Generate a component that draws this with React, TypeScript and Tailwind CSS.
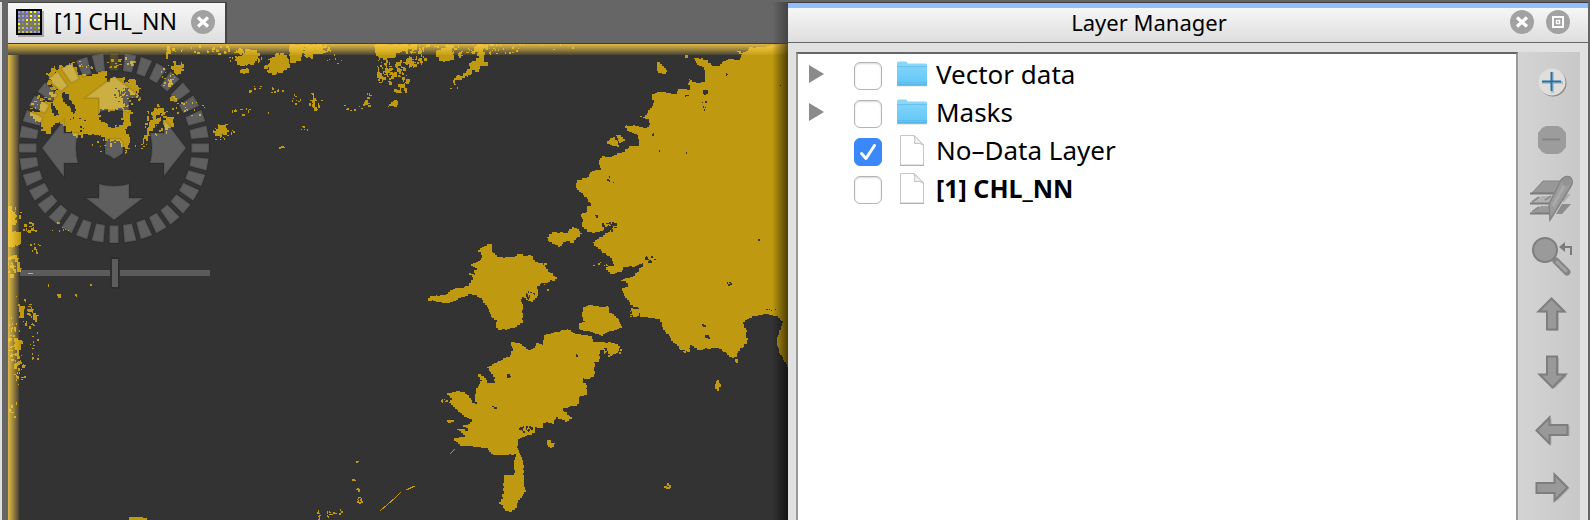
import React, { useState } from "react";

type Pt = [number, number];

function makeRandom(seed: number) {
  let s = seed;
  return () => {
    s = (s * 1664525 + 1013904223) % 4294967296;
    return s / 4294967296;
  };
}

/* Turns a coarse outline into a coastline with small irregular steps. */
function coast(points: string, seed: number, rough = 4): string {
  const rnd = makeRandom(seed);
  const pts = points.trim().split(/\s+/).map((p) => p.split(",").map(Number) as Pt);
  const snap = (v: number) => Math.round(v / 3) * 3;
  let d = "";
  pts.forEach((p, i) => {
    const q = pts[(i + 1) % pts.length];
    const n = Math.max(1, Math.round(Math.hypot(q[0] - p[0], q[1] - p[1]) / 8));
    for (let k = 0; k < n; k++) {
      const t = k / n;
      const j = k === 0 ? 0 : rough;
      const x = snap(p[0] + (q[0] - p[0]) * t + (rnd() - 0.5) * j);
      const y = snap(p[1] + (q[1] - p[1]) * t + (rnd() - 0.5) * j);
      d += d === "" ? `M${x} ${y}` : `H${x}V${y}`;
    }
  });
  return d + "Z";
}

/* Scattered pixels inside an ellipse: cx, cy, rx, ry, count, largest size. */
type Cluster = [number, number, number, number, number, number];
function specks(list: Cluster[], seed: number): string {
  const rnd = makeRandom(seed);
  let d = "";
  for (const [cx, cy, rx, ry, n, max] of list) {
    for (let i = 0; i < n; i++) {
      const a = rnd() * Math.PI * 2;
      const r = Math.sqrt(rnd());
      const x = Math.round(cx + Math.cos(a) * rx * r);
      const y = Math.round(cy + Math.sin(a) * ry * r);
      const w = 1 + Math.floor(rnd() * max);
      const h = 1 + Math.floor(rnd() * max);
      d += `M${x} ${y}h${w}v${h}h${-w}z`;
    }
  }
  return d;
}

const MAINLAND =
  "687,9 640,15 603,22 575,20 565,33 550,38 530,28 530,35 545,45 540,60 515,58 490,65 480,78 455,75 445,60 430,55 402,56 410,75 425,82 434,95 434,125 415,128 395,120 387,118 388,130 378,130 390,142 390,150 375,148 355,145 350,162 325,160 300,155 275,165 275,180 282,188 275,205 255,230 235,228 265,238 270,255 262,265 225,255 188,258 200,272 235,290 238,318 215,318 195,335 155,350 130,348 118,370 122,390 95,395 82,415 50,420 48,445 70,465 93,498 80,500 82,515 62,525 70,545 65,562 80,575 105,577 130,570 127,550 135,560 160,565 150,575 130,590 98,610 115,628 150,655 162,678 145,680 130,675 150,702 182,697 190,682 215,680 245,670 248,680 230,700 210,715 182,722 205,730 205,742 188,745 188,760 210,795 235,805 240,830 300,838 308,870 330,895 360,930 385,930 390,915 410,930 435,925 470,925 490,935 515,955 530,945 540,925 562,910 560,870 550,845 575,828 610,822 650,828 668,850 650,900 658,940 687,985";
const NORTH_ISLAND =
  "85,235 90,228 130,224 165,204 205,198 212,180 225,178 208,160 228,165 222,150 232,145 214,132 240,120 245,105 235,90 245,80 262,72 275,78 275,95 290,112 330,112 360,102 378,108 392,108 400,120 435,140 445,155 472,178 450,185 430,190 412,200 412,235 400,245 385,240 372,230 362,245 368,262 368,308 350,322 330,328 295,328 288,318 292,300 275,290 265,262 250,240 230,225 210,222 190,232 150,250 85,240";
const SOUTH_ISLAND =
  "340,365 355,368 385,390 400,385 408,370 430,378 432,345 470,335 500,328 525,342 575,348 578,365 640,368 660,385 655,400 635,408 620,385 600,395 598,425 582,430 583,470 560,478 553,475 548,490 558,495 560,525 540,530 532,558 495,565 488,572 515,598 500,605 475,592 465,600 462,612 445,605 430,612 430,625 410,622 405,640 375,650 355,665 352,685 360,705 370,725 372,800 378,815 360,840 350,865 335,875 315,868 298,845 308,830 312,765 345,765 342,720 348,702 320,706 278,703 265,685 235,680 185,678 163,655 185,650 200,655 190,640 170,628 190,628 205,640 205,625 188,615 210,612 215,598 185,580 165,560 148,545 155,535 142,518 175,512 200,525 215,548 232,558 225,530 228,505 245,480 235,462 250,468 262,490 285,490 285,470 260,440 290,425 330,405 338,385 332,365";
const SMALL_ISLES = [
  "442,50 455,35 495,38 515,22 530,28 545,43 530,55 522,70 500,62 480,82 465,72 448,62",
  "550,262 565,255 625,262 628,280 655,298 665,325 650,330 620,338 610,348 580,335 540,328 538,310 555,302 545,285",
  "442,660 450,660 454,670 464,672 455,684 445,676",
  "432,128 442,128 442,136 432,136",
];
const COAST_ISLES = [
  "291,66 300,72 322,95 318,102 297,98 291,85",
  "375,44 386,44 384,54 376,52",
  "138,303 160,292 174,308 176,322 155,314",
  "166,284 180,286 196,302 184,308",
  "216,808 240,806 238,828 222,830",
  "524,972 530,950 534,968 528,975",
  "470,1020 476,1028 482,1042 478,1052 470,1046 464,1032",
];
const DIAL_ISLES = [
  "154,217 199,194 219,202 234,224 259,227 314,214 322,247 339,232 369,232 379,257 359,292 374,322 344,332 305,327 294,345 304,367 324,380 369,377 389,422 389,447 374,442 359,422 324,422 299,407 264,402 234,414 219,402 189,372 164,367 159,382 152,402 124,387 124,367 94,347 89,337 119,337 119,312 149,307 174,282 174,262 144,222",
  "374,247 400,238 414,262 409,282 389,277",
  "366,325 384,322 394,337 392,377 380,387 370,365",
  "455,350 480,352 484,362 470,372 458,392 444,410 430,436 428,415 445,395",
  "490,360 502,350 522,358 522,380 505,390 494,380",
  "496,146 510,143 512,162 503,176 498,166",
  "517,187 545,192 556,204 544,222 530,226 516,208",
  "500,240 522,232 520,256 508,260",
  "508,290 528,295 530,306 512,304",
  "460,332 484,325 504,334 480,344 468,350",
  "638,392 655,374 675,372 682,392 665,412 650,408",
  "702,177 725,165 735,148 770,152 774,176 745,190 735,196 712,184",
];
const TOP_ISLES = [
  "106,85 130,70 160,72 174,85 165,98 145,105 110,98",
  "205,105 215,80 240,64 262,85 270,115 250,128 215,130 202,120",
  "270,42 310,40 312,70 302,92 275,98 268,72",
  "318,42 378,42 375,70 350,72 335,85 320,80",
  "514,42 655,42 650,60 600,68 575,85 535,92 528,70",
  "582,92 600,90 602,108 588,112",
  "620,85 630,80 642,108 625,110",
  "710,60 740,42 760,55 762,90 735,96 715,82",
  "820,42 875,42 850,65 852,85 864,100 840,118 795,145 765,160 763,145 790,130 808,100 835,85",
  "585,180 610,155 605,188 590,190",
  "560,118 566,110 570,128 562,150",
  "535,108 540,130 550,148 544,152 532,130",
  "126,118 144,118 140,130 128,130",
  "334,190 342,184 344,220 350,234 336,232",
  "580,214 592,214 590,232 564,230 566,222 580,224",
];
const HOLE_SHAPES = [
  "190,277 204,282 208,300 222,315 228,332 222,345 212,325 196,310 188,300",
  "152,310 165,325 176,345 168,348 156,328",
  "206,356 222,352 214,364",
];

const SPECKS: Cluster[] = [
  [56, 80, 12, 16, 50, 4],
  [78, 66, 16, 5, 16, 2],
  [40, 106, 10, 12, 24, 3],
  [120, 63, 14, 7, 20, 3],
  [128, 92, 12, 14, 36, 2],
  [118, 145, 30, 8, 24, 2],
  [156, 122, 12, 18, 36, 3],
  [168, 76, 8, 12, 16, 2],
  [190, 108, 18, 8, 18, 2],
  [220, 132, 13, 8, 24, 2],
  [205, 49, 38, 4, 26, 3],
  [245, 56, 16, 9, 44, 3],
  [276, 65, 14, 8, 30, 3],
  [310, 50, 20, 6, 40, 3],
  [254, 88, 8, 4, 8, 2],
  [276, 89, 8, 5, 8, 2],
  [315, 104, 8, 6, 12, 3],
  [296, 100, 4, 8, 9, 2],
  [335, 60, 8, 6, 7, 2],
  [250, 111, 20, 3, 10, 3],
  [302, 128, 5, 2, 5, 2],
  [281, 146, 3, 2, 4, 2],
  [366, 98, 4, 8, 10, 3],
  [354, 106, 12, 4, 8, 2],
  [384, 72, 8, 14, 36, 3],
  [400, 80, 8, 14, 36, 3],
  [412, 58, 12, 8, 30, 3],
  [442, 50, 32, 7, 40, 3],
  [498, 49, 20, 5, 26, 2],
  [530, 46, 60, 3, 10, 2],
  [455, 86, 8, 5, 4, 2],
  [12, 214, 8, 8, 20, 4],
  [13, 238, 6, 8, 36, 4],
  [12, 265, 8, 10, 24, 4],
  [30, 227, 8, 5, 14, 3],
  [34, 246, 6, 6, 8, 3],
  [60, 228, 12, 3, 6, 2],
  [18, 312, 12, 18, 20, 2],
  [30, 316, 6, 14, 26, 3],
  [13, 345, 7, 18, 24, 4],
  [19, 368, 6, 14, 24, 3],
  [35, 348, 5, 18, 12, 2],
  [14, 398, 6, 20, 6, 3],
  [76, 295, 2, 1, 2, 2],
  [318, 515, 1, 6, 12, 2],
  [330, 514, 5, 4, 12, 2],
  [339, 511, 2, 2, 4, 2],
  [359, 499, 3, 3, 14, 2],
  [352, 480, 2, 1, 4, 3],
  [357, 489, 2, 1, 4, 3],
  [356, 460, 1, 1, 2, 2],
  [443, 400, 4, 2, 8, 2],
  [450, 421, 5, 1, 10, 2],
  [546, 286, 4, 5, 4, 2],
  [612, 350, 9, 6, 18, 2],
  [632, 312, 6, 4, 6, 2],
  [600, 264, 8, 2, 6, 2],
  [667, 485, 3, 2, 7, 3],
  [684, 350, 6, 2, 8, 2],
];

const HOLES: Cluster[] = [
  [80, 122, 6, 8, 5, 2],
  [120, 92, 6, 10, 12, 2],
  [530, 294, 5, 5, 12, 2],
  [525, 428, 8, 3, 18, 2],
  [493, 407, 1, 1, 4, 3],
  [576, 354, 1, 1, 3, 3],
  [507, 375, 1, 1, 3, 3],
  [704, 92, 2, 3, 12, 3],
  [704, 104, 2, 6, 6, 2],
  [726, 73, 2, 1, 3, 2],
  [685, 95, 2, 1, 3, 2],
  [610, 225, 5, 4, 22, 3],
  [597, 215, 2, 1, 4, 2],
  [646, 257, 2, 1, 5, 3],
  [650, 260, 5, 4, 6, 2],
  [610, 179, 4, 4, 4, 2],
  [652, 134, 1, 2, 3, 2],
  [658, 150, 1, 1, 1, 2],
  [687, 152, 1, 1, 1, 2],
  [728, 283, 2, 1, 4, 2],
  [758, 239, 1, 1, 2, 2],
  [703, 325, 1, 2, 5, 2],
  [706, 336, 3, 1, 7, 2],
  [772, 309, 7, 1, 6, 1],
  [780, 85, 1, 2, 3, 1],
];

const ticks = Array.from({ length: 36 }, (_, i) => i * 10);

function MapView() {
  return (
    <svg
      className="block h-full w-full"
      viewBox="8 44 780 476"
      preserveAspectRatio="xMinYMin slice"
      role="img"
      aria-label="CHL_NN image view"
    >
      <defs>
        <linearGradient id="glow" x1="0" y1="0" x2="0" y2="1">
          <stop offset="0" stopColor="#ffd24a" stopOpacity="0.85" />
          <stop offset="0.5" stopColor="#ffd24a" stopOpacity="0.5" />
          <stop offset="1" stopColor="#ffd24a" stopOpacity="0.1" />
        </linearGradient>
        <linearGradient id="glowLeft" href="#glow" x1="0" y1="0" x2="1" y2="0" />
        <linearGradient id="shade" x1="0" y1="0" x2="1" y2="0">
          <stop offset="0" stopColor="#000" stopOpacity="0" />
          <stop offset="1" stopColor="#000" stopOpacity="0.6" />
        </linearGradient>
      </defs>
      <rect x="8" y="44" width="780" height="476" fill="#333333" />
      <g fill="#bf9a10" shapeRendering="crispEdges">
        <g transform="translate(560 40) scale(0.33333)">
          <path d={coast(MAINLAND, 7)} />
          {COAST_ISLES.map((p, i) => (
            <path key={i} d={coast(p, 20 + i)} />
          ))}
        </g>
        <g transform="translate(400 220) scale(0.33333)">
          <path d={coast(NORTH_ISLAND, 3)} />
          <path d={coast(SOUTH_ISLAND, 5)} />
          {SMALL_ISLES.map((p, i) => (
            <path key={i} d={coast(p, 40 + i)} />
          ))}
        </g>
        <g transform="scale(0.33333)">
          {DIAL_ISLES.map((p, i) => (
            <path key={i} d={coast(p, 60 + i, 12)} />
          ))}
          {HOLE_SHAPES.map((p, i) => (
            <path key={i} d={coast(p, 110 + i, 6)} fill="#333333" />
          ))}
        </g>
        <g transform="translate(200 30) scale(0.33333)">
          {TOP_ISLES.map((p, i) => (
            <path key={i} d={coast(p, 80 + i, 12)} />
          ))}
        </g>
        <path d="M8 206h4v6h3v8h-3v12h9v12h-6v3h-7zM19 306h6v3h-1v9h-4v-6h-1zM15 341h8v3h-2v6h-6v-3h-1zM14 364l7-4v2l-7 7zM129 517h14v1h4v2h-18zM57 294h4v4h-3zM28 273h5v1h-5zM57 222h3v2h-3zM48 284h1v3h-1zM90 284h2v2h-2zM75 294h2v2h-2z" />
        <path d={specks(SPECKS, 11)} />
        <path
          d="M380 511l8-7 7-6 6-6M407 490l8-4M450 454l5-5M406 490l8-4"
          fill="none"
          stroke="#bf9a10"
          strokeWidth="1"
        />
        <path d={specks(HOLES, 29)} fill="#333333" />
      </g>

      <rect x="8" y="44" width="780" height="11" fill="url(#glow)" />
      <rect x="8" y="55" width="11" height="465" fill="url(#glowLeft)" />
      <rect x="772" y="44" width="16" height="476" fill="url(#shade)" />

      <g transform="translate(114 148)" stroke="#000" strokeOpacity="0.1" strokeWidth="2">
        {ticks.map((a) => (
          <path
            key={a}
            d={a % 90 === 0 ? "M-4.500-95H4.500V-77.500H-4.500Z" : "M-6-95H6L4.500-77.500H-4.500Z"}
            transform={`rotate(${a})`}
            fill={a === 0 ? "#bf9a10" : "#fff"}
            fillOpacity="0.22"
          />
        ))}
        {[0, 90, 180, 270].map((a) => (
          <path
            key={a}
            d="M-15 36Q0 40 15 36V50H29L0 72L-28 50H-15Z"
            transform={`rotate(${a})`}
            fill="#fff"
            fillOpacity="0.21"
          />
        ))}
        <path d="M-9-5L-6-9H6L9-5V5L5 8L0 11L-4 8L-9 6Z" fill="#fff" fillOpacity="0.21" />
      </g>
    </svg>
  );
}

function RoundIcon({ kind }: { kind: "close" | "float" }) {
  return (
    <svg className="block size-6" viewBox="0 0 24 24" aria-hidden="true">
      <circle cx="12" cy="12" r="12" fill="#a2a2a2" />
      {kind === "close" ? (
        <path d="M7 7.500L17 16.500M17 7.500L7 16.500" stroke="#fff" strokeWidth="3.200" />
      ) : (
        <g fill="none" stroke="#fff">
          <rect x="7" y="7" width="10" height="10" strokeWidth="2" />
          <rect x="10.500" y="10.500" width="3" height="3" fill="#8a8a8a" strokeWidth="1.500" />
        </g>
      )}
    </svg>
  );
}

function RasterIcon() {
  const rows = ["bbbyyb", "bbbyby", "bbyyyy", "ydwdww", "wwbbdw", "wwwwbb"];
  const colors: Record<string, string> = { b: "#9999ff", y: "#ffff20", w: "#cccc30", d: "#a08a00" };
  return (
    <svg className="block size-7" viewBox="0 0 28 28" aria-hidden="true" shapeRendering="crispEdges">
      <rect x="2" y="2" width="26" height="26" fill="#000" fillOpacity="0.25" />
      <rect x="1" y="1" width="24" height="24" fill="#777" stroke="#000" strokeWidth="2" />
      {rows.flatMap((row, r) =>
        row.split("").map((k, c) => (
          <rect key={`${r}-${c}`} x={2 + c * 4} y={2 + r * 4} width="2" height="2" fill={colors[k]} />
        )),
      )}
    </svg>
  );
}

function FolderIcon() {
  return (
    <svg className="block h-7 w-[30px]" viewBox="0 0 30 28" aria-hidden="true">
      <defs>
        <linearGradient id="folder" x1="0" y1="0" x2="0" y2="1">
          <stop offset="0" stopColor="#7fd3fa" />
          <stop offset="1" stopColor="#62c6f7" />
        </linearGradient>
      </defs>
      <path d="M0 25.500H30V26.500H0Z" fill="#000" fillOpacity="0.15" />
      <path d="M0 3Q0 1.500 1.500 1.500H8.500Q10 1.500 10.500 3.500H28.500Q30 3.500 30 5V25H0Z" fill="#8ad6f8" />
      <path d="M0 6.500H30V24Q30 25.500 28.500 25.500H1.500Q0 25.500 0 24Z" fill="url(#folder)" />
      <path d="M0 6.500H30M0 22.500H30" stroke="#52b4e4" strokeOpacity="0.6" />
      <path d="M0 25H30" stroke="#4ba3d0" />
    </svg>
  );
}

function FileIcon() {
  return (
    <svg className="block h-8 w-[30px]" viewBox="0 0 30 32" aria-hidden="true">
      <path d="M3.500 1.500H17L26.500 11V31H3.500Z" fill="#fff" stroke="#c6c6c6" />
      <path d="M17 1.500Q18.500 5 17.500 9.500Q23 8.500 26.500 11Z" fill="#f2f2f2" stroke="#c0c0c0" />
      <path d="M3 31.500H27" stroke="#b0b0b0" />
    </svg>
  );
}

type Layer = { id: string; name: string; group?: boolean; bold?: boolean };
const layers: Layer[] = [
  { id: "vector", name: "Vector data", group: true },
  { id: "masks", name: "Masks", group: true },
  { id: "nodata", name: "No–Data Layer" },
  { id: "chl", name: "[1] CHL_NN", bold: true },
];

function LayerRow({ layer }: { layer: Layer }) {
  const [on, setOn] = useState(layer.id === "nodata");
  return (
    <li className="flex h-[38px] items-center">
      <span className="flex w-[45px] shrink-0 items-center">
        {layer.group && (
          <button type="button" aria-label={`Expand ${layer.name}`} className="pb-1">
            <svg className="block h-[18px] w-[15px]" viewBox="0 0 15 18" aria-hidden="true">
              <path d="M0 0L15 9L0 18Z" fill="#8b8b8b" />
            </svg>
          </button>
        )}
      </span>
      <span className="relative size-7 shrink-0">
        <input
          id={layer.id}
          type="checkbox"
          checked={on}
          onChange={(e) => setOn(e.target.checked)}
          className="block size-7 appearance-none rounded-md border border-[#b4b4b4] bg-white shadow-[inset_0_1px_2px_#d8d8d8] checked:border-[#3b88fd] checked:bg-[#3b88fd] checked:shadow-none"
        />
        {on && (
          <svg className="pointer-events-none absolute inset-0 size-7" viewBox="0 0 28 28" aria-hidden="true">
            <path d="M7.500 15.500L12 20.500L20.500 7.500" fill="none" stroke="#fff" strokeWidth="3" strokeLinecap="round" strokeLinejoin="round" />
          </svg>
        )}
      </span>
      <label htmlFor={layer.id} className="flex items-center gap-[9px] pb-1 pl-[15px]">
        {layer.group ? <FolderIcon /> : <FileIcon />}
        <span className={layer.bold ? "text-[25px] leading-8 font-bold" : "text-[26px] leading-8"}>{layer.name}</span>
      </label>
    </li>
  );
}

const ARROW = "M16 1L29 14H21.500V32H11.500V14H3Z";

function Arrow({ angle }: { angle: number }) {
  return (
    <svg className="block size-9" viewBox="-18 -18 36 36" aria-hidden="true">
      <g transform="translate(2 1)" opacity="0.35">
        <path d={ARROW} transform={`rotate(${angle}) translate(-16.500 -16.500)`} fill="#6d6d6d" />
      </g>
      <path d={ARROW} transform={`rotate(${angle}) translate(-16.500 -16.500)`} fill="#999" stroke="#7e7e7e" strokeWidth="2" />
    </svg>
  );
}

const tools: { label: string; icon: React.ReactNode }[] = [
  {
    label: "Add layer",
    icon: (
      <svg className="block size-8" viewBox="0 0 32 32" aria-hidden="true">
        <circle cx="17" cy="17" r="13.500" fill="#8c8680" />
        <circle cx="16" cy="16" r="13.500" fill="#e1deda" />
        <path d="M16.500 6V27M6 16.500H27" stroke="#9fc6e0" strokeWidth="3" />
        <path d="M15.500 6V25M6 15.500H25" stroke="#2d6e9e" strokeWidth="2" />
      </svg>
    ),
  },
  {
    label: "Remove layer",
    icon: (
      <svg className="block size-8" viewBox="0 0 32 32" aria-hidden="true">
        <path d="M10 2H22L26 4L30 9V23L26 28L22 30H10L6 28L2 23V9L6 4Z" fill="#9c9c9c" />
        <path d="M6 15.500H24" stroke="#858585" strokeWidth="2" />
      </svg>
    ),
  },
  {
    label: "Edit layer",
    icon: (
      <svg className="block size-12" viewBox="0 0 48 48" aria-hidden="true">
        <path d="M4 39.500L13 32H32L24 39.500Z" fill="#9a9a9a" />
        <path d="M3 29L13 22H34L26 29Z" fill="#b2b2b2" />
        <path d="M4 19L15 7H39L28 19Z" fill="#989898" stroke="#868686" />
        <path d="M2 19.500H26M2 29.500H24M2 39.500H24" stroke="#7c7c7c" strokeWidth="2" />
        <path d="M4 28L11 23M4 38L11 33M17 26L23 22" stroke="#8b8b8b" strokeWidth="2" />
        <path d="M34 30H43L34 40H28Z" fill="#8c8c8c" />
        <path d="M35 20H43L35 29Z" fill="#adadad" />
        <path d="M21 30L33 6Q37 1 42 3Q46 7 43 12L27 38L22 46Z" fill="#9b9b9b" stroke="#858585" strokeWidth="1.500" />
        <path d="M25 32L36 12" stroke="#a9a9a9" strokeWidth="3" />
        <circle cx="38.500" cy="7.500" r="4" fill="#929292" />
      </svg>
    ),
  },
  {
    label: "Zoom to layer",
    icon: (
      <svg className="block size-11" viewBox="0 0 44 44" aria-hidden="true">
        <path d="M26 27L37 38" stroke="#858585" strokeWidth="7" strokeLinecap="round" />
        <path d="M27 28L36 37" stroke="#a3a3a3" strokeWidth="3" strokeLinecap="round" />
        <circle cx="15" cy="16" r="12" fill="#9a9a9a" stroke="#7e7e7e" strokeWidth="2" />
        <path d="M31 13H41V21" fill="none" stroke="#7b7b7b" strokeWidth="2" />
        <path d="M29 13L35 8V18Z" fill="#7b7b7b" />
      </svg>
    ),
  },
  { label: "Move up", icon: <Arrow angle={0} /> },
  { label: "Move down", icon: <Arrow angle={180} /> },
  { label: "Move left", icon: <Arrow angle={270} /> },
  { label: "Move right", icon: <Arrow angle={90} /> },
];

export default function App() {
  return (
    <div className="grid h-screen grid-cols-[788fr_802fr] overflow-hidden bg-[#666] pt-[2px] font-['Noto_Sans',sans-serif] text-black">
      <main className="flex min-w-0">
        <div className="mr-[6px] w-[2px] shrink-0 bg-[#e1e1e1]" />
        <section className="flex min-w-0 flex-1 flex-col">
          <div className="flex h-[42px] shrink-0 border-b border-[#3c3c3c] bg-linear-to-r from-[#666] from-[98%] to-[#444]">
            <div className="flex items-center border-t border-r-2 border-[#444] bg-linear-to-b from-[#f7f7f7] to-[#dedede] pr-[10px] pl-2">
              <RasterIcon />
              <h1 className="pb-1 pl-[10px] text-[23px] leading-7">[1] CHL_NN</h1>
              <button type="button" aria-label="Close view" className="pb-[2px] pl-[14px]">
                <RoundIcon kind="close" />
              </button>
            </div>
          </div>
          <div className="relative min-h-0 flex-1">
            <MapView />
            <input
              type="range"
              aria-label="Zoom"
              defaultValue={50}
              className="absolute top-[213px] left-3 h-8 w-[190px] appearance-none bg-transparent [&::-webkit-slider-runnable-track]:h-[6px] [&::-webkit-slider-runnable-track]:bg-white/20 [&::-webkit-slider-thumb]:-mt-[13px] [&::-webkit-slider-thumb]:h-8 [&::-webkit-slider-thumb]:w-[10px] [&::-webkit-slider-thumb]:appearance-none [&::-webkit-slider-thumb]:border-2 [&::-webkit-slider-thumb]:border-[#2e2e2e] [&::-webkit-slider-thumb]:bg-[#5c5c5c]"
            />
          </div>
        </section>
      </main>

      <aside className="mr-[2px] flex min-w-0 flex-col border-t border-[#3c3c3c] bg-[#e1e1e1]">
        <header className="flex h-10 shrink-0 items-center border-t-[5px] border-b border-t-[#8fbfff] border-b-[#666] bg-linear-to-b from-[#f6f6f6] to-[#dedede] pr-[18px]">
          <h2 className="flex-1 pb-[7px] text-center text-[22px] leading-7">Layer Manager</h2>
          <div className="flex gap-3 pb-[6px]">
            <button type="button" aria-label="Close panel">
              <RoundIcon kind="close" />
            </button>
            <button type="button" aria-label="Float panel">
              <RoundIcon kind="float" />
            </button>
          </div>
        </header>
        <div className="flex min-h-0 flex-1 pt-[9px] pr-2 pl-2">
          <ul className="min-w-0 flex-1 border-t-2 border-r-2 border-l-2 border-t-[#666] border-r-[#999] border-l-[#999] bg-white pt-[3px] pl-[11px]">
            {layers.map((l) => (
              <LayerRow key={l.id} layer={l} />
            ))}
          </ul>
          <div role="toolbar" aria-label="Layer tools" className="flex w-[62px] shrink-0 flex-col bg-linear-to-r from-[#d4d4d4] to-[#c8c8c8] pt-px pl-[6px]">
            {tools.map((t) => (
              <button key={t.label} type="button" aria-label={t.label} className="flex h-[58px] shrink-0 items-center justify-center">
                {t.icon}
              </button>
            ))}
          </div>
        </div>
      </aside>
    </div>
  );
}
